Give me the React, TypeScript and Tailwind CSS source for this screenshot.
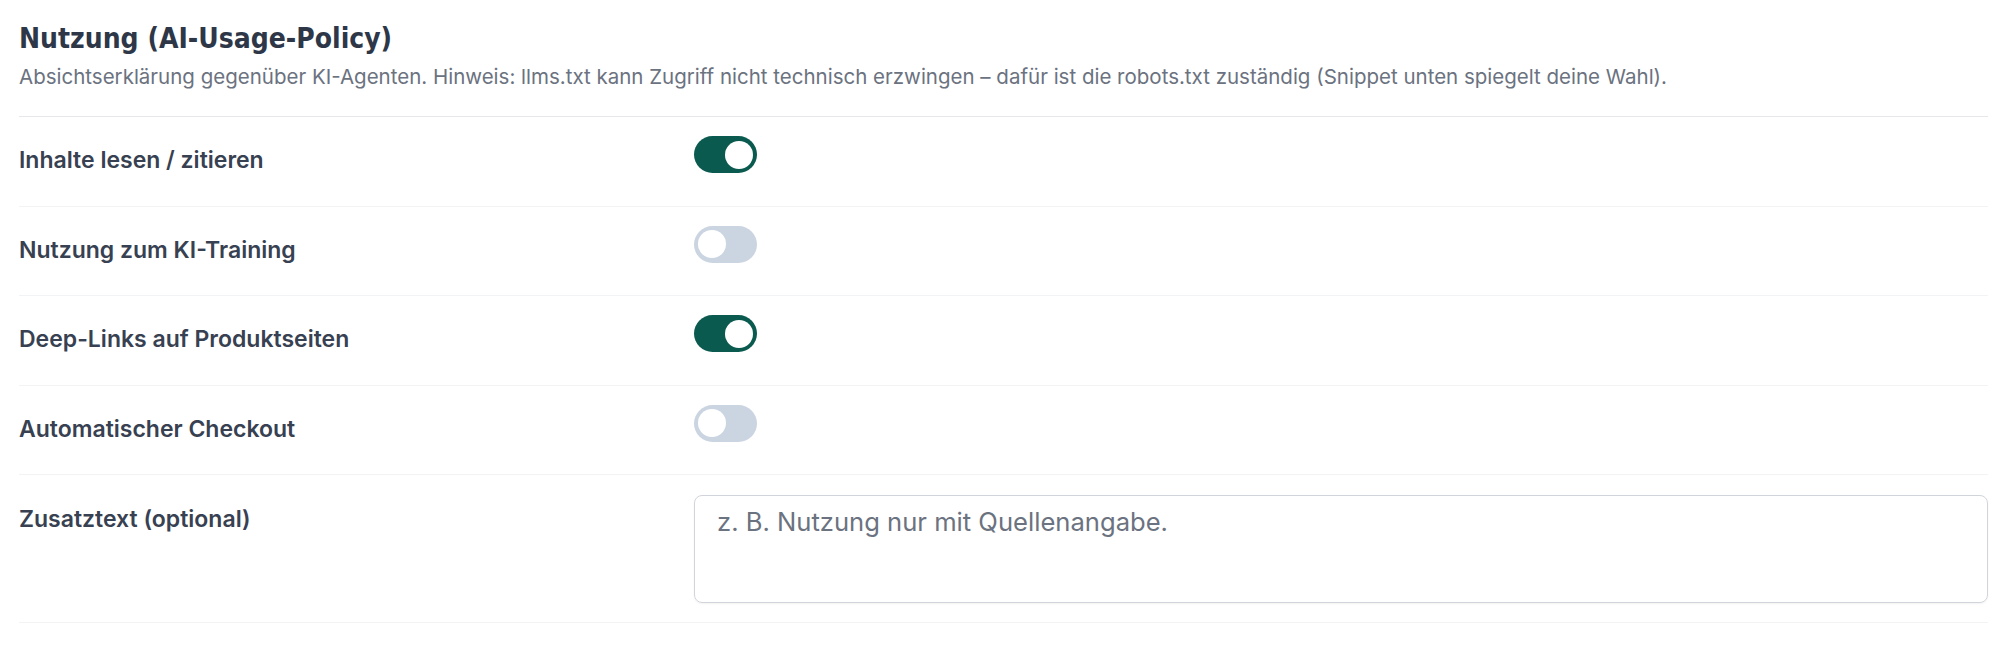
import React, { useState } from "react";

type Row = { key: string; label: string; on: boolean };

const initialRows: Row[] = [
  { key: "read", label: "Inhalte lesen / zitieren", on: true },
  { key: "train", label: "Nutzung zum KI-Training", on: false },
  { key: "deeplinks", label: "Deep-Links auf Produktseiten", on: true },
  { key: "checkout", label: "Automatischer Checkout", on: false },
];

function Toggle({ on, onChange }: { on: boolean; onChange: () => void }) {
  return (
    <button
      type="button"
      role="switch"
      aria-checked={on}
      onClick={onChange}
      className={
        "relative flex h-[37px] w-[63px] items-center rounded-full px-[4px] " +
        (on ? "justify-end bg-[#0b5a4f]" : "justify-start bg-[#cbd5e1]")
      }
    >
      <span className="block h-[28px] w-[28px] rounded-full bg-white" />
    </button>
  );
}

export default function App() {
  const [rows, setRows] = useState(initialRows);
  const [note, setNote] = useState("");

  return (
    <div
      className="min-h-[656px] w-full bg-white pl-[19px] pr-[14px] pt-[19px]"
      style={{ fontFamily: "Inter, 'Noto Sans', sans-serif" }}
    >
      <h2
        className="text-[28px] font-bold leading-[40px] text-[#2d3748]"
        style={{ fontFamily: "'DejaVu Sans Condensed', 'Liberation Sans Narrow', Roboto, sans-serif" }}
      >
        Nutzung (AI-Usage-Policy)
      </h2>
      <p className="mt-[3px] text-[20.5px] leading-[30px] text-[#6b7280]">
        Absichtserklärung gegenüber KI-Agenten. Hinweis: llms.txt kann Zugriff nicht technisch erzwingen – dafür ist die robots.txt zuständig (Snippet unten spiegelt deine Wahl).
      </p>

      <div className="mt-[24px] border-t border-[#e5e7eb]">
        {rows.map((r) => (
          <div
            key={r.key}
            className="grid h-[89.5px] grid-cols-[675px_1fr] items-start border-b border-[#f1f3f5] pt-[19px]"
          >
            <span className="pt-[8px] text-[23px] font-semibold leading-[32px] text-[#374151]">
              {r.label}
            </span>
            <div>
              <Toggle
                on={r.on}
                onChange={() =>
                  setRows((prev) =>
                    prev.map((p) => (p.key === r.key ? { ...p, on: !p.on } : p))
                  )
                }
              />
            </div>
          </div>
        ))}
        <div className="grid grid-cols-[675px_1fr] items-start border-b border-[#f1f3f5] pb-[19px] pt-[20px]">
          <span className="pt-[8px] text-[23px] font-semibold leading-[32px] text-[#374151]">
            Zusatztext (optional)
          </span>
          <textarea
            value={note}
            onChange={(e) => setNote(e.target.value)}
            placeholder="z. B. Nutzung nur mit Quellenangabe."
            className="h-[108px] w-full resize-none rounded-[8px] border border-[#d1d5db] px-[22px] py-[10px] text-[25.6px] leading-[32px] text-[#374151] shadow-[0_1px_2px_rgba(0,0,0,0.05)] outline-none placeholder:text-[#6b7280]"
          />
        </div>
      </div>
    </div>
  );
}
